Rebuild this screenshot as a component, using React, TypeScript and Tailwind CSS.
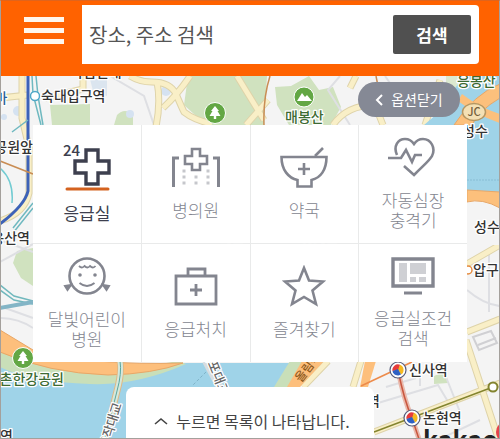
import { useState } from "react";
import type { ReactNode } from "react";

const FONT = "font-['Noto_Sans_CJK_KR',sans-serif]";

function EmergencyIcon() {
  return (
    <svg width="52" height="48" viewBox="0 0 52 48" fill="none" aria-hidden="true">
      <text x="2" y="13" fontSize="15" fontWeight="500" fill="#3d3f4e">24</text>
      <path d="M25 7h12v11h11v12H37v11H25V30H14V18h11z" stroke="#3d3f4e" strokeWidth="3.400" />
      <path d="M6 46h41" stroke="#d4621f" strokeWidth="3" strokeLinecap="round" />
    </svg>
  );
}

function HospitalIcon() {
  return (
    <svg width="52" height="42" viewBox="0 0 52 42" fill="none" aria-hidden="true">
      <path d="M9 12H3.500v29M43 12h5.500v29" stroke="#83858f" strokeWidth="3" />
      <path d="M22 3h8v7h7v8h-7v6h-8v-6h-7v-8h7z" stroke="#83858f" strokeWidth="2.600" />
      <path d="M12.500 25h3M12.500 31h3M12.500 37h3M36.500 25h3M36.500 31h3M36.500 37h3M24.500 31h3M24.500 37h3" stroke="#c6c7cc" strokeWidth="3" />
    </svg>
  );
}

function PharmacyIcon() {
  return (
    <svg width="52" height="42" viewBox="0 0 52 42" fill="none" stroke="#83858f" strokeWidth="2.600" aria-hidden="true">
      <path d="M3.500 11h45c0 13-6 21-15 23v6.500h-14V34c-9-2-16-10-16-23z" />
      <path d="M37 10l8-8M26 17v12M20 23h12" />
    </svg>
  );
}

function DefibrillatorIcon() {
  return (
    <svg width="52" height="42" viewBox="0 0 52 42" fill="none" stroke="#83858f" strokeWidth="2.600" aria-hidden="true">
      <path d="M10 19C6 10 11 3 18 3c4 0 7 2 9 5 2-3 5-5 9-5 8 0 13 9 9 17-2 4-6 7-18 19L17 30" />
      <path d="M1 22h13l5-8 6 12 3-7h7" />
    </svg>
  );
}

function ChildIcon() {
  return (
    <svg width="52" height="42" viewBox="0 0 52 42" fill="none" stroke="#83858f" aria-hidden="true">
      <circle cx="26" cy="21" r="17.500" strokeWidth="2.600" />
      <path d="M18 11q3 3 5.500 0q3 3 5.500 0q3 3 5.500 0" strokeWidth="1.800" />
      <path d="M18.500 28q7.500 6 15 0" strokeWidth="2" />
      <circle cx="19" cy="20" r="1.800" fill="#83858f" stroke="none" />
      <circle cx="34" cy="20" r="1.800" fill="#83858f" stroke="none" />
      <path d="M10 30l-6 1 2.500 4zM42 30l6 1-2.500 4z" fill="#83858f" strokeWidth="2" />
    </svg>
  );
}

function FirstAidIcon() {
  return (
    <svg width="52" height="42" viewBox="0 0 52 42" fill="none" stroke="#83858f" strokeWidth="2.800" aria-hidden="true">
      <path d="M6 11h40v28H6zM18 11V4h17v7M26 19v12M20 25h12" />
    </svg>
  );
}

function StarIcon() {
  return (
    <svg width="52" height="42" viewBox="0 0 52 42" fill="none" stroke="#83858f" strokeWidth="2.600" aria-hidden="true">
      <path d="M26 3l5 12.500 14 1-10.500 9 3.500 13.500-12-7-12 7 3.500-13.500L7 16.500l14-1z" />
    </svg>
  );
}

function MonitorIcon() {
  return (
    <svg width="52" height="40" viewBox="0 0 52 40" fill="none" aria-hidden="true">
      <path d="M6 3h40v27H6z" stroke="#83858f" strokeWidth="3.400" />
      <path d="M17 37h18" stroke="#83858f" strokeWidth="3" />
      <path d="M12 7h8v19h-8zM23 7h16v11H23zM23 21h6v5h-6zM32 21h7v5h-7z" fill="#cfd0d4" />
    </svg>
  );
}

type Option = { id: string; lines: string[]; icon: ReactNode };

const OPTIONS: Option[] = [
  { id: "er", lines: ["응급실"], icon: <EmergencyIcon /> },
  { id: "hospital", lines: ["병의원"], icon: <HospitalIcon /> },
  { id: "pharmacy", lines: ["약국"], icon: <PharmacyIcon /> },
  { id: "aed", lines: ["자동심장", "충격기"], icon: <DefibrillatorIcon /> },
  { id: "child", lines: ["달빛어린이", "병원"], icon: <ChildIcon /> },
  { id: "firstaid", lines: ["응급처치"], icon: <FirstAidIcon /> },
  { id: "favorite", lines: ["즐겨찾기"], icon: <StarIcon /> },
  { id: "condition", lines: ["응급실조건", "검색"], icon: <MonitorIcon /> },
];

function TreePin({ x, y }: { x: number; y: number }) {
  return (
    <g transform={`translate(${x} ${y})`}>
      <circle r="10.500" fill="#63a744" stroke="#fff" />
      <path d="M0-7l4 5H2.500l3 5H1.200v3h-2.400V3h-4.300l3-5H-4z" fill="#fff" />
    </g>
  );
}

function SubwayPin({ x, y }: { x: number; y: number }) {
  return (
    <g transform={`translate(${x} ${y})`}>
      <circle r="8" fill="#fff" stroke="#555a78" strokeWidth="1.200" />
      <path d="M-5.500 1A5.500 5.500 0 0 1 2-5.200L1 0z" fill="#e63b3b" />
      <path d="M2-5.200A5.500 5.500 0 0 1 3 4.600L0 0z" fill="#f5b921" />
      <path d="M3 4.600A5.500 5.500 0 0 1-5.500 1L0-1z" fill="#2f61c4" />
    </g>
  );
}

const MAIN_STREETS =
  "M22 76v42l7 30v45q-4 20-29 28M0 98l28-3M45 98l38-9V76M130 76q10 6 22 6 18 0 24 12 6 14 8 18 10 8 28 12M157 82q4 20-1 45M190 76q-12 18-27 32M237 76l27 44M268 100l-22 25M333 125q14-20 42-20l8 20M356 76l-6 12M440 80l-15 45M467 264l33-19M467 332l33-13M466 340l34 104M328 361l-25 26M361 361l-8 26M374 432l126-49";

function MapCanvas() {
  return (
    <svg
      className="absolute inset-0 h-full w-full"
      viewBox="1 76 498 362"
      preserveAspectRatio="xMidYMid slice"
      fill="none"
      aria-hidden="true"
    >
      <path d="M0 76h500v363H0z" fill="#f4f4f4" />

      {/* parks */}
      <g fill="#d0e2bf">
        <path d="M50 105l40-1v21H52zM117 115q8-8 16 0v10h-19z" />
        <path d="M188 76h79l-3 49h-58l-22-20z" />
        <path d="M275 87l16-1 18-10 10 14 14-3 8 20-10 18h-42l-12-20z" />
        <path d="M17 251l16-3v38l-12-8-8-15z" />
        <path d="M434 376l12-5 2 12-14 1z" />
      </g>
      <path d="M90 79h17v17l-14-5z" fill="#dbe5ef" />
      <g fill="#d5e2f1">
        <circle cx="18" cy="111" r="5" />
        <circle cx="4" cy="117" r="3" />
        <circle cx="130" cy="114" r="4" />
        <circle cx="166" cy="91" r="5" />
      </g>

      {/* minor streets */}
      <g stroke="#dedfe3" strokeWidth="2">
        <path d="M110 76l34 20 10 29M340 76l-12 14 22 35M385 76l14 20M0 240l33 12M0 262l33-18M0 318q18 0 33 10M5 308l28 10M467 290q16 14 33 16M489 250v62M386 387l30-9M378 403l60-18 12 20M440 362l20 50M480 420l-40 19M420 362v24" />
        <path d="M473 337l18-6 6 12-18 7zM478 345l18-7" stroke="#d0d0d3" />
      </g>

      {/* main streets */}
      <path d={MAIN_STREETS} stroke="#ded3a9" strokeWidth="7" />
      <path d={MAIN_STREETS} stroke="#f9efc7" strokeWidth="5" />

      {/* river, north east */}
      <path d="M424 125l14-12 14-24 12-13h36v120h-33v-71z" fill="#9fd3e8" />
      <path d="M446 76h18l-18 24z" fill="#dce9cf" />
      <path d="M500 84q-26 10-46 41h18q6-14 28-27z" fill="#fcc07c" stroke="#e8a767" />
      <path d="M462 94q18 14 38 20v9q-24-8-42-22z" fill="#fcc07c" />
      <path d="M467 180h33" stroke="#88bdd4" strokeDasharray="2 1" />
      <path d="M467 190l33 2v16q-18-10-33-6z" fill="#fcc07c" stroke="#e8a767" />
      <path d="M467 203q18-4 33 8v34h-33z" fill="#f4f4f4" />

      {/* river, south */}
      <path d="M0 355q60 22 178 8h118l-22 40v36H0z" fill="#9fd3e8" />
      <path d="M0 352q80 28 178 9l8 3q-50 22-96 20-60-2-90-17z" fill="#c9dfb9" />
      <path d="M0 330l33 20q60 16 150 13-30 11-75 12-60-2-108-23z" fill="#fdbf7c" stroke="#e8a767" />
      <path d="M290 361h18l-20 26h-14z" fill="#c9dfb9" />
      <path d="M302 361h22l-24 26h-13z" fill="#fdbf7c" />
      <path d="M365 361h11l-8 26h-8z" fill="#fdbf7c" />
      <path d="M120 361q2 12-3 30l-12 48" stroke="#e2b883" strokeWidth="7" />
      <path d="M120 361q2 12-3 30l-12 48" stroke="#d5e8dc" strokeWidth="5" />
      <path d="M120 361q2 12-3 30l-12 48" stroke="#5aa6a0" />
      <path d="M206 361l18 34" stroke="#d8dde0" strokeWidth="8" />
      <path d="M206 372l-14 14" stroke="#7fb3c8" strokeDasharray="3 2" />

      {/* rail lines */}
      <path d="M28 76v115q-3 14-28 33" stroke="#3d62b8" strokeWidth="3" />
      <path d="M32 76l1 18 8 31M36 76l2 20 5 29M28 120l-16 12M33 203l-20 25M33 208l-20 25" stroke="#6fb9c0" strokeWidth="1.500" />
      <path d="M0 168q14 12 12 35" stroke="#72cbd2" strokeWidth="1.500" />
      <path d="M0 161l33 13" stroke="#c98d54" strokeWidth="1.500" />
      <path d="M0 285l14 11 19 5M0 290l14 10 19 4" stroke="#71b8bd" strokeWidth="1.500" />
      <path d="M0 308l33-6" stroke="#83b5c6" strokeWidth="4" />
      <path d="M270 76q-7 22-6 49M376 76l2 10" stroke="#c98d54" strokeWidth="1.500" />
      <path d="M361 386l51-24" stroke="#ed8b4b" strokeWidth="1.500" />
      <path d="M398 370q6 30 14 48l7 21" stroke="#e9b9ac" strokeWidth="5" />
      <path d="M398 370q6 30 14 48l7 21" stroke="#c9573f" strokeWidth="1.500" />
      <path d="M374 432l119-45" stroke="#83842f" strokeWidth="1.500" />
      <circle cx="493" cy="387" r="4.500" fill="#fff" stroke="#83842f" strokeWidth="2" />
      <circle cx="35" cy="96" r="4.500" fill="#fff" stroke="#4fa8c8" strokeWidth="1.500" />
      <circle cx="468" cy="270" r="4" fill="#fff" stroke="#e58a3c" strokeWidth="1.500" />

      <TreePin x={215} y={113} />
      <TreePin x={23} y={358} />
      <circle cx="304" cy="97" r="10" fill="#63a744" stroke="#fff" />
      <path d="M297 101l5-8 3 4 2-2 5 6z" fill="#fff" />
      <ellipse cx="474" cy="112" rx="11.500" ry="8.500" fill="#f4e0b4" stroke="#b69762" strokeWidth="1.500" />
      <text x="474" y="116" fontSize="11" fontWeight="500" fill="#75603c" textAnchor="middle">JC</text>
      <SubwayPin x={398} y={370} />
      <SubwayPin x={412} y={418} />

      {/* place names */}
      <g fontSize="14" fontWeight="500" stroke="#fff" strokeWidth="2.500" strokeLinejoin="round" style={{ paintOrder: "stroke" }}>
        <g fill="#333">
          <text x="41" y="101">숙대입구역</text>
          <text x="33" y="152" textAnchor="end">공원앞</text>
          <text x="30" y="243" textAnchor="end">용산역</text>
          <text x="462" y="136">성수</text>
          <text x="474" y="232">성수</text>
          <text x="473" y="275">압구정</text>
          <text x="409" y="375">신사역</text>
          <text x="423" y="423">논현역</text>
          <text x="367" y="406">역</text>
          <text x="0" y="441">연</text>
          <text x="70" y="77">국립현대</text>
          <text x="1" y="103" textAnchor="middle" fill="#2c5d98">마</text>
          <text x="206" y="256">보광동</text>
          <text x="300" y="256">한남동</text>
        </g>
        <g fill="#3d6b33">
          <text x="285" y="122">매봉산</text>
          <text x="457" y="86">응봉산</text>
          <text x="64" y="384" textAnchor="end">이촌한강공원</text>
        </g>
        <g fill="#666" fontSize="13">
          <text transform="translate(108 450) rotate(-73)">동작대교</text>
          <text transform="translate(203 352) rotate(68)">반포대교</text>
        </g>
        <text transform="translate(301 383) rotate(-52)" fontSize="12" fill="#8f5a1c" stroke="none">올림픽</text>
      </g>
      <text x="423" y="449" fontSize="25" fontWeight="700" fill="#222">kakao</text>
      <circle cx="507" cy="432" r="11" fill="#e5424c" />
    </svg>
  );
}

export default function App() {
  const [query, setQuery] = useState("");
  const [selected, setSelected] = useState("er");

  return (
    <div className={`${FONT} w-full overflow-hidden border border-[#a4a09c] border-t-[#e0641c]`}>
      <header className="flex items-start bg-[#ff6200] pt-1 pr-5 pb-3 pl-[23px]">
        <button type="button" aria-label="메뉴" className="mt-3 mr-[18px] flex w-10 shrink-0 flex-col gap-[6px]">
          <span className="h-[5px] w-full bg-[#fff6ec]" />
          <span className="h-[5px] w-full bg-[#fff6ec]" />
          <span className="h-[5px] w-full bg-[#fff6ec]" />
        </button>
        <form
          onSubmit={(e) => e.preventDefault()}
          className="flex h-[59px] min-w-0 flex-1 items-center rounded-r bg-white pr-2 pl-[7px]"
        >
          <input
            type="text"
            aria-label="장소, 주소 검색"
            placeholder="장소, 주소 검색"
            value={query}
            onChange={(e) => setQuery(e.target.value)}
            className="min-w-0 flex-1 bg-transparent text-[20px] text-[#555] outline-none placeholder:text-[#555]"
          />
          <button type="submit" className="h-[39px] w-[78px] shrink-0 rounded-xs bg-[#505050] text-[17px] font-bold text-white">
            검색
          </button>
        </form>
      </header>

      <main className="relative overflow-hidden">
        <MapCanvas />
        <div className="relative flex flex-col px-8 pt-[6px]">
          <button
            type="button"
            className="mr-[7px] flex h-[35px] w-[102px] items-center justify-center gap-2 self-end rounded-full bg-[#858995] text-[14px] text-white"
          >
            <svg width="8" height="12" viewBox="0 0 8 12" fill="none" stroke="#fff" strokeWidth="2" aria-hidden="true">
              <path d="M7 1L2 6l5 5" />
            </svg>
            옵션닫기
          </button>

          <div className="mt-2 grid auto-rows-[118px] grid-cols-4 gap-px bg-[#e4e5e5]/70">
            {OPTIONS.map((o) => (
              <button
                key={o.id}
                type="button"
                aria-pressed={selected === o.id}
                onClick={() => setSelected(o.id)}
                className={`flex flex-col items-center justify-center gap-3 bg-white pb-[2px] text-[17px] leading-5 ${
                  selected === o.id ? "text-[#3d3f4e]" : "font-light text-[#83858f]"
                }`}
              >
                {o.icon}
                <span>
                  {o.lines.map((line) => (
                    <span key={line} className="block">{line}</span>
                  ))}
                </span>
              </button>
            ))}
          </div>

          <button
            type="button"
            className="mt-[25px] flex h-[51px] w-[248px] items-center justify-center gap-2 self-center rounded-t-lg bg-white pt-4 pl-1 text-[16px] text-[#444]"
          >
            <svg width="14" height="8" viewBox="0 0 14 8" fill="none" stroke="#444" strokeWidth="1.600" aria-hidden="true">
              <path d="M1 7l6-5 6 5" />
            </svg>
            누르면 목록이 나타납니다.
          </button>
        </div>
      </main>
    </div>
  );
}
